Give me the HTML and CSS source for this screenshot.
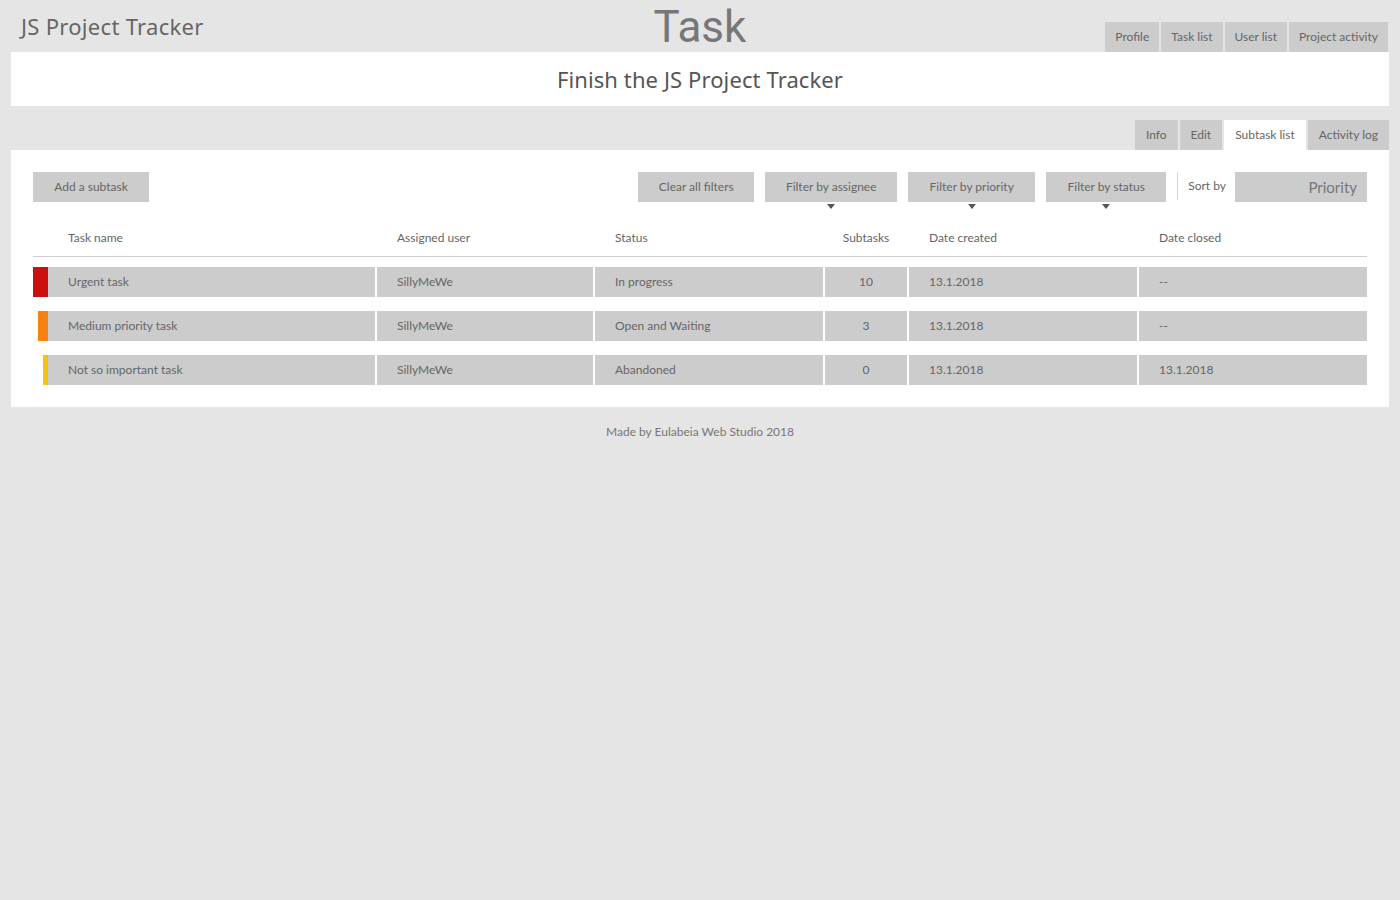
FILE: index.html
```html
<!DOCTYPE html>
<html lang="en">
<head>
<meta charset="utf-8">
<title>Task - JS Project Tracker</title>
<link rel="stylesheet" href="styles.css">
</head>
<body>
<div class="page">
  <header class="top">
    <div class="brand">JS Project Tracker</div>
    <h1 class="page-title">Task</h1>
    <nav class="main-nav">
      <a class="tab">Profile</a>
      <a class="tab">Task list</a>
      <a class="tab">User list</a>
      <a class="tab">Project activity</a>
    </nav>
  </header>

  <section class="title-panel">
    <h2 class="task-title">Finish the JS Project Tracker</h2>
  </section>

  <nav class="sub-nav">
    <a class="tab">Info</a>
    <a class="tab">Edit</a>
    <a class="tab active">Subtask list</a>
    <a class="tab">Activity log</a>
  </nav>

  <section class="panel">
    <div class="toolbar">
      <button class="btn btn-add">Add a subtask</button>
      <div class="filters">
        <button class="btn btn-clear">Clear all filters</button>
        <button class="btn dropdown w-assignee">Filter by assignee</button>
        <button class="btn dropdown w-priority">Filter by priority</button>
        <button class="btn dropdown w-status">Filter by status</button>
        <span class="divider"></span>
        <span class="sort-label">Sort by</span>
        <div class="sort-box">Priority</div>
      </div>
    </div>

    <div class="grid head">
      <div class="cell first">Task name</div>
      <div class="cell">Assigned user</div>
      <div class="cell">Status</div>
      <div class="cell center">Subtasks</div>
      <div class="cell">Date created</div>
      <div class="cell">Date closed</div>
    </div>

    <div class="rows">
      <div class="grid row">
        <div class="cell first name"><span class="prio urgent"></span><span class="name-text">Urgent task</span></div>
        <div class="cell">SillyMeWe</div>
        <div class="cell">In progress</div>
        <div class="cell center">10</div>
        <div class="cell">13.1.2018</div>
        <div class="cell">--</div>
      </div>
      <div class="grid row">
        <div class="cell first name"><span class="prio medium"></span><span class="name-text">Medium priority task</span></div>
        <div class="cell">SillyMeWe</div>
        <div class="cell">Open and Waiting</div>
        <div class="cell center">3</div>
        <div class="cell">13.1.2018</div>
        <div class="cell">--</div>
      </div>
      <div class="grid row">
        <div class="cell first name"><span class="prio low"></span><span class="name-text">Not so important task</span></div>
        <div class="cell">SillyMeWe</div>
        <div class="cell">Abandoned</div>
        <div class="cell center">0</div>
        <div class="cell">13.1.2018</div>
        <div class="cell">13.1.2018</div>
      </div>
    </div>
  </section>

  <footer class="footer">Made by Eulabeia Web Studio 2018</footer>
</div>
</body>
</html>
```

FILE: styles.css
```css
* { box-sizing: border-box; }

html, body {
  margin: 0;
  padding: 0;
  background: #e5e5e5;
}

body {
  font-family: "Lato", "Liberation Sans", sans-serif;
  font-size: 12px;
  color: #666;
}

.page {
  padding: 0 11px;
}

/* ---------- header ---------- */
.top {
  display: grid;
  grid-template-columns: 1fr auto 1fr;
  grid-template-rows: 52px;
  height: 52px;
}

.brand {
  font-family: "Noto Sans", "Open Sans", sans-serif;
  font-size: 22px;
  letter-spacing: 0.3px;
  color: #666;
  padding: 12px 0 0 10px;
  line-height: 28px;
}

.page-title {
  margin: 0;
  height: 52px;
  padding-top: 1px;
  font-family: "Roboto", "Noto Sans", sans-serif;
  font-weight: 400;
  font-size: 44px;
  line-height: normal;
  color: #777;
}

.main-nav {
  justify-self: end;
  align-self: end;
  display: flex;
  gap: 2px;
  margin-right: 1px;
}

.tab {
  display: block;
  height: 30px;
  line-height: 30px;
  padding: 0 10px;
  background: #cccccc;
  color: #666;
  font-size: 12px;
  cursor: pointer;
}

.tab.active {
  background: #ffffff;
}

/* ---------- title panel ---------- */
.title-panel {
  background: #fff;
  height: 54px;
  display: flex;
  align-items: center;
  justify-content: center;
}

.task-title {
  margin: 0;
  font-family: "Noto Sans", "Open Sans", sans-serif;
  font-weight: 400;
  font-size: 22px;
  letter-spacing: 0.1px;
  color: #555;
}

/* ---------- sub nav ---------- */
.sub-nav {
  display: flex;
  justify-content: flex-end;
  gap: 2px;
  margin-top: 14px;
}

.sub-nav .tab {
  padding: 0 11px;
}

/* ---------- panel ---------- */
.panel {
  background: #fff;
  padding: 22px;
}

.toolbar {
  display: flex;
  align-items: flex-start;
  height: 30px;
}

.btn {
  height: 30px;
  border: 0;
  margin: 0;
  background: #cccccc;
  color: #666;
  font-family: "Lato", "Liberation Sans", sans-serif;
  font-size: 12px;
  padding: 0 0 2px 0;
  cursor: pointer;
}

.btn-add { width: 116px; }
.btn-clear { width: 116px; }
.w-assignee { width: 132px; }
.w-priority { width: 127px; }
.w-status { width: 120px; }

.filters {
  margin-left: auto;
  display: flex;
  align-items: flex-start;
  gap: 11px;
}

.dropdown {
  position: relative;
}

.dropdown::after {
  content: "";
  position: absolute;
  left: 50%;
  top: 32px;
  margin-left: -4px;
  border-left: 4px solid transparent;
  border-right: 4px solid transparent;
  border-top: 5px solid #555;
}

.divider {
  width: 1px;
  height: 28px;
  background: #d4d4d4;
}

.sort-label {
  line-height: 28px;
  margin-left: -1px;
}

.sort-box {
  width: 132px;
  height: 30px;
  margin-left: -2px;
  background: #cccccc;
  color: #777;
  font-size: 15px;
  line-height: 30px;
  text-align: right;
  padding-right: 10px;
}

/* ---------- table ---------- */
.grid {
  display: grid;
  grid-template-columns: 342px 216px 228px 82px 228px 228px;
  column-gap: 2px;
}

.head {
  margin-top: 18px;
  height: 37px;
  border-bottom: 1px solid #cfcfcf;
  align-items: center;
}

.head .cell {
  padding-left: 20px;
  padding-bottom: 1px;
}

.head .cell.first {
  padding-left: 35px;
}

.cell.center {
  text-align: center;
  padding-left: 0 !important;
}

.rows {
  margin-top: 10px;
  display: flex;
  flex-direction: column;
  gap: 14px;
}

.row {
  height: 30px;
}

.row .cell {
  background: #cccccc;
  line-height: 30px;
  padding-left: 20px;
  white-space: nowrap;
}

.row .cell.name {
  display: flex;
  padding-left: 0;
  background: transparent;
}

.prio {
  width: 15px;
  height: 30px;
  flex: none;
}

.prio.urgent { background: #cc1010; }
.prio.medium { background: #f7820f; border-left: 5px solid #fff; }
.prio.low { background: #f7c20c; border-left: 10px solid #fff; }

.name-text {
  flex: 1;
  background: #cccccc;
  padding-left: 20px;
}

/* ---------- footer ---------- */
.footer {
  text-align: center;
  color: #777;
  font-size: 12px;
  padding-top: 17px;
}
```
